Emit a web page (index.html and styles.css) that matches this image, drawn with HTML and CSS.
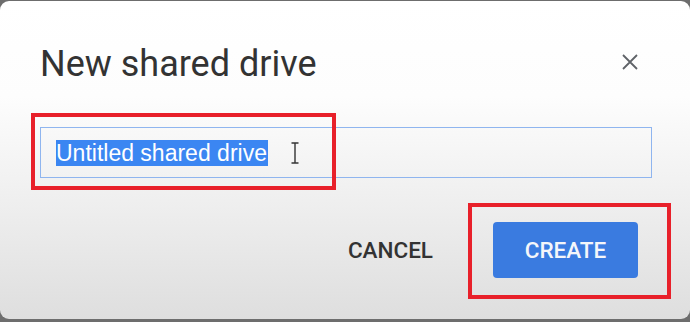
FILE: index.html
```html
<!DOCTYPE html>
<html lang="en">
<head>
  <meta charset="UTF-8" />
  <title>New shared drive</title>
  <link rel="stylesheet" href="styles.css">
</head>
<body>

  <div class="dialog">
    <div class="dialog-head">
      <h2>New shared drive</h2>
      <span class="close">
        <svg width="18" height="18" viewBox="0 0 18 18"><path d="M2 2 L16 16 M16 2 L2 16" stroke="#5f6368" stroke-width="1.8" fill="none"/></svg>
      </span>
    </div>

    <div class="field">
      <span class="selected">Untitled shared drive</span>
      <span class="ibeam">
        <svg width="8" height="22" viewBox="0 0 8 22"><path d="M0.5 1 H7.5 M4 1 V21 M0.5 21 H7.5" stroke="#333" stroke-width="1.4" fill="none"/></svg>
      </span>
    </div>

    <div class="actions">
      <button class="btn-text">CANCEL</button>
      <button class="btn-primary">CREATE</button>
    </div>

    <!-- annotation boxes -->
    <div class="mark mark-input"></div>
    <div class="mark mark-create"></div>
  </div>

</body>
</html>
```

FILE: styles.css
```css
* {
  box-sizing: border-box;
}

body {
  margin: 0;
  background: #6d6d6d;
  height: 322px;
  overflow: hidden;
  padding-top: 1px;
}

.dialog {
  position: relative;
  height: 318px;
  border-radius: 9px;
  background: linear-gradient(to bottom, #ffffff 0%, #fdfdfd 30%, #eeeeee 65%, #dedede 100%);
  padding: 42px 38px 0 40px;
  font-family: Roboto, "Noto Sans", sans-serif;
}

.dialog-head {
  display: flex;
  align-items: center;
  justify-content: space-between;
  height: 42px;
}

.dialog-head h2 {
  margin: 0;
  font-size: 36px;
  font-weight: 400;
  color: #333;
  line-height: 42px;
}

.close {
  display: flex;
  margin-right: 13px;
  margin-top: -4px;
}

.field {
  margin-top: 42px;
  height: 51px;
  border: 1px solid #8fb5ef;
  display: flex;
  align-items: center;
  padding-left: 15px;
}

.selected {
  background: #3b86f2;
  color: #fff;
  font-family: "Liberation Sans", Arial, sans-serif;
  font-size: 23px;
  line-height: 26px;
  padding-right: 1px;
}

.ibeam {
  display: flex;
  margin-left: 23px;
}

.actions {
  display: flex;
  justify-content: flex-end;
  align-items: center;
  gap: 36px;
  margin-top: 44px;
  padding-right: 14px;
}

.actions button {
  font-family: Roboto, sans-serif;
  font-weight: 500;
  font-size: 22.5px;
  border: none;
  cursor: pointer;
}

.btn-text {
  background: none;
  color: #333;
  padding: 0 24px;
}

.btn-primary {
  background: #3a7be0;
  color: #f4f6fa;
  width: 145px;
  height: 56px;
  border-radius: 4px;
}

/* red annotation boxes */
.mark {
  position: absolute;
  border: 4px solid #e8202a;
}

.mark-input {
  left: 31px;
  top: 112px;
  width: 305px;
  height: 77px;
}

.mark-create {
  left: 468px;
  top: 202px;
  width: 203px;
  height: 96px;
}
```
